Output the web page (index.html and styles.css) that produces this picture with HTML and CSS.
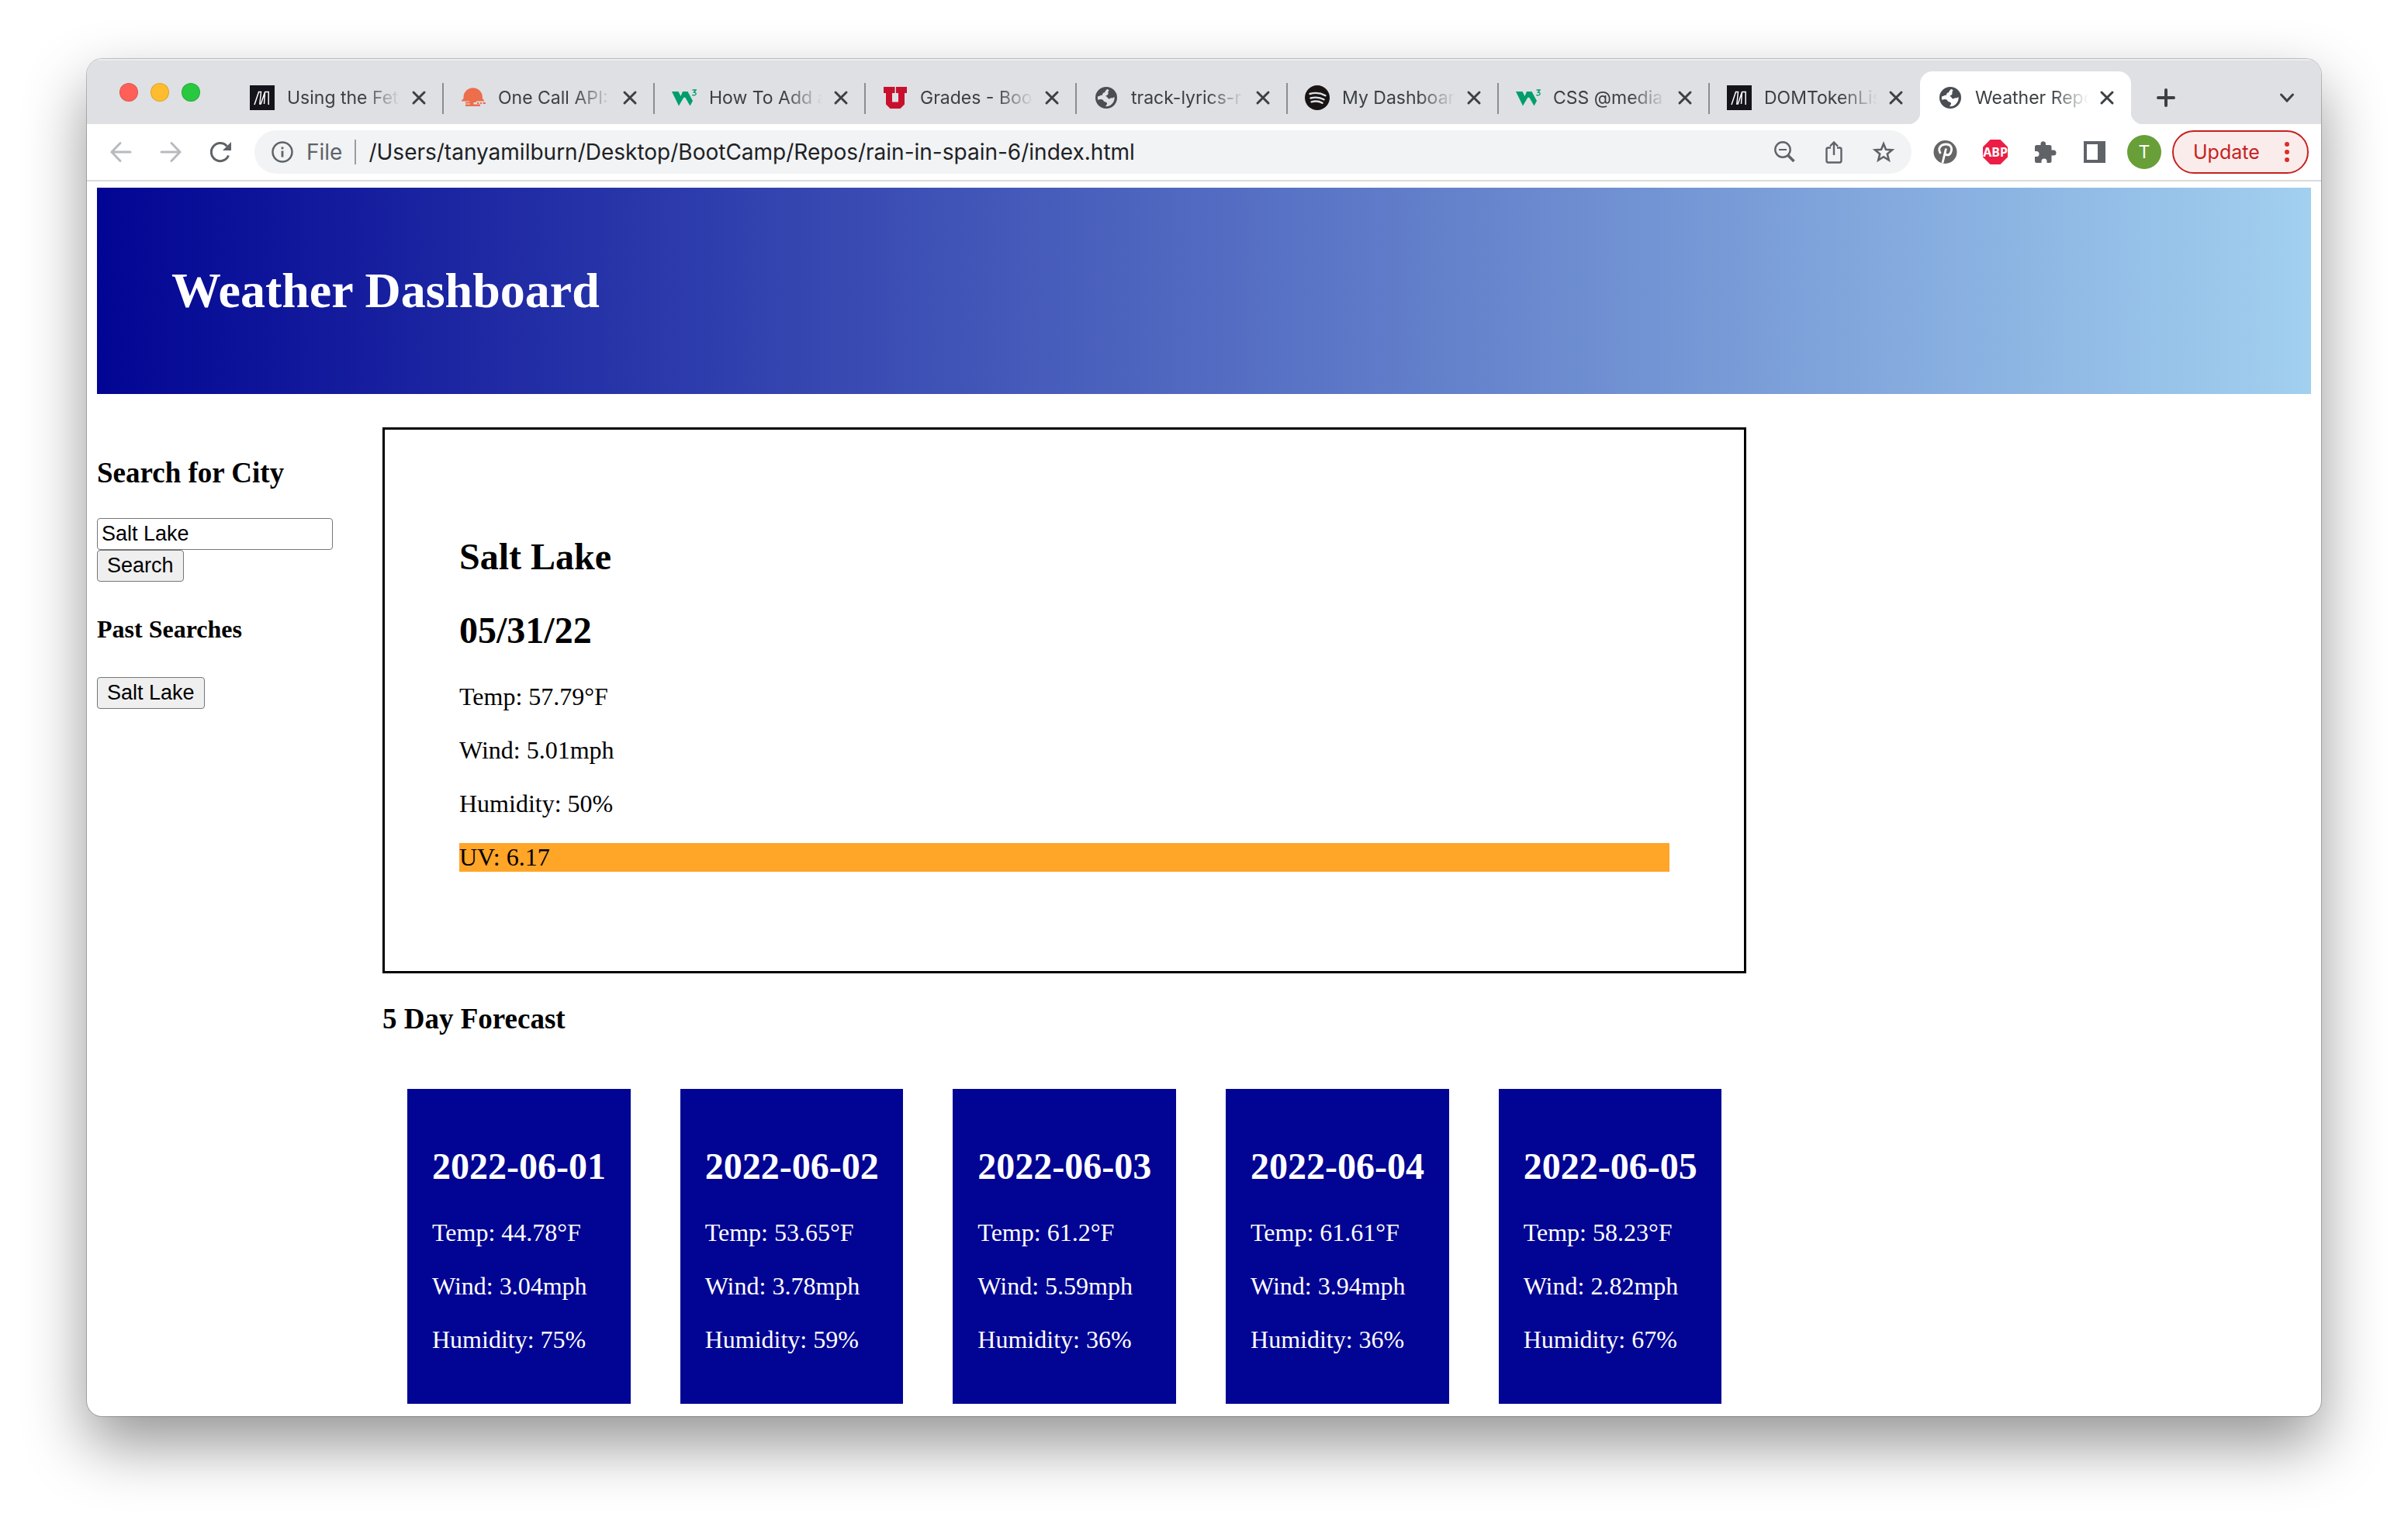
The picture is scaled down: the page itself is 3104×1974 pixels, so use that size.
FILE: index.html
```html
<!DOCTYPE html>
<html lang="en">
<head>
<meta charset="utf-8">
<meta name="viewport" content="width=device-width, initial-scale=1">
<title>Weather Report</title>
<link rel="stylesheet" href="styles.css">
</head>
<body>
<svg class="sprite" aria-hidden="true">
  <symbol id="close" viewBox="0 0 24 24"><path d="M5 5L19 19M19 5L5 19" stroke="currentColor" stroke-width="3" stroke-linecap="round" fill="none"/></symbol>
  <symbol id="mdn" viewBox="0 0 32 32"><rect width="32" height="32" fill="#15141a"/><path d="M6 25L11.500 8.500H14.500L12.800 24H14.300L19.500 8.500L18.500 24M19.500 8.500H24.200V25" stroke="#fff" stroke-width="1.500" fill="none"/></symbol>
  <symbol id="owm" viewBox="0 0 32 32"><path d="M1 20.500v-1.500C3 18.500 3.500 17.500 3.500 15.500a12.200 12.200 0 0 1 24.400 0C27.900 17.500 28.500 18.500 30 19v1.500H20v1.500h-3.500v2.500H25v2.500H6v-2.500h6v-1H6v-2h5v-1zM21 22h2.500v2H21zM25 22h2v2h-2zM28.500 22H32v2h-3.500z" fill="#ec6e4c"/></symbol>
  <symbol id="w3" viewBox="0 0 32 32"><path d="M0 8H8.500L11.500 14L14 8H20.500L27 20L23.500 26.500L17.500 16L15.500 15.500L9 26.500z" fill="#009e6b"/><path d="M26.500 6h4.500l-2.500 3q3 0 2.500 2.500-.8 2-4.700 1" stroke="#009e6b" stroke-width="1.400" fill="none"/></symbol>
  <symbol id="utah" viewBox="0 0 32 32"><path d="M1 2h14.500v8H12v11.500h8V10h-3V2h14v8h-3v14.500l-5.500 5.500h-13L4 24.500V10H1z" fill="#c8102e"/></symbol>
  <symbol id="globe" viewBox="0 0 32 32"><path fill-rule="evenodd" d="M16 2a14 14 0 1 0 0 28 14 14 0 0 0 0-28zM17 4.800c-1 1.700-3 2.600-2.800 4.500-2.500 0-3.200 1.700-3 3.200-2.600 0-3.700 1.600-6.100 1.700-.4 2-.2 3.400.2 4.600 3.500-1.600 6.700-.8 7.200 1.200.3 1.500 3 1.200 4.300 2.700 1 1.200-.8 2.600-1.800 4.500 3 .3 6-.8 8.300-3.200 2.600-2.700 3.600-5.600 3.200-9.300-1.400 1.500-2.700 2-3.700 1.600-1.500-.5-1.900 1.600-3.700 1-1.600-.6-1.500-3-4-3.200 1.200-2 2.700-1.100 3.300-2.700.6-1.500-.9-2.600 1.300-5.100z" fill="#4a4e53"/></symbol>
  <symbol id="spotify" viewBox="0 0 32 32"><circle cx="16" cy="16" r="16" fill="#191414"/><path d="M6.500 11q10.500-3 20 2.200M7.500 16.500q9.500-2.500 17 1.800M8.500 21.300q8-2 14 1.500" stroke="#dee1e6" stroke-width="2.400" stroke-linecap="round" fill="none"/></symbol>
</svg>

<div class="window">
  <nav class="tabs" aria-label="Tabs">
    <div class="lights">
      <button class="light red" aria-label="Close window"></button>
      <button class="light yellow" aria-label="Minimize"></button>
      <button class="light green" aria-label="Zoom"></button>
    </div>
    <div class="tab"><svg class="favicon"><use href="#mdn"/></svg><span class="tab-title">Using the Fetch</span><button class="tab-close" aria-label="Close tab"><svg><use href="#close"/></svg></button></div>
    <div class="tab"><svg class="favicon"><use href="#owm"/></svg><span class="tab-title">One Call API: </span><button class="tab-close" aria-label="Close tab"><svg><use href="#close"/></svg></button></div>
    <div class="tab"><svg class="favicon"><use href="#w3"/></svg><span class="tab-title">How To Add a</span><button class="tab-close" aria-label="Close tab"><svg><use href="#close"/></svg></button></div>
    <div class="tab"><svg class="favicon"><use href="#utah"/></svg><span class="tab-title">Grades - Boot</span><button class="tab-close" aria-label="Close tab"><svg><use href="#close"/></svg></button></div>
    <div class="tab"><svg class="favicon"><use href="#globe"/></svg><span class="tab-title">track-lyrics-r</span><button class="tab-close" aria-label="Close tab"><svg><use href="#close"/></svg></button></div>
    <div class="tab"><svg class="favicon"><use href="#spotify"/></svg><span class="tab-title">My Dashboard</span><button class="tab-close" aria-label="Close tab"><svg><use href="#close"/></svg></button></div>
    <div class="tab"><svg class="favicon"><use href="#w3"/></svg><span class="tab-title">CSS @media</span><button class="tab-close" aria-label="Close tab"><svg><use href="#close"/></svg></button></div>
    <div class="tab last"><svg class="favicon"><use href="#mdn"/></svg><span class="tab-title">DOMTokenList</span><button class="tab-close" aria-label="Close tab"><svg><use href="#close"/></svg></button></div>
    <div class="tab active"><svg class="favicon"><use href="#globe"/></svg><span class="tab-title">Weather Report</span><button class="tab-close" aria-label="Close tab"><svg><use href="#close"/></svg></button></div>
    <button class="strip-button" aria-label="New tab"><svg viewBox="0 0 24 24"><path d="M12 2V22M2 12H22" stroke="currentColor" stroke-width="4" stroke-linecap="round"/></svg></button>
    <button class="strip-button menu" aria-label="Search tabs"><svg viewBox="0 0 24 24"><path d="M4.500 8L12 16L19.500 8" stroke="currentColor" stroke-width="3" fill="none" stroke-linecap="round"/></svg></button>
  </nav>

  <div class="toolbar">
    <div class="tools">
      <button class="tool faded" aria-label="Back"><svg viewBox="0 0 32 32"><path d="M28 16H4M15 4.500L4 16L15 27.500" fill="none" stroke="currentColor" stroke-width="3" stroke-linecap="round"/></svg></button>
      <button class="tool faded" aria-label="Forward"><svg viewBox="0 0 32 32"><path d="M4 16H28M17 4.500L28 16L17 27.500" fill="none" stroke="currentColor" stroke-width="3" stroke-linecap="round"/></svg></button>
      <button class="tool" aria-label="Reload"><svg viewBox="0 0 32 32"><path d="M26.500 20.500A11.500 11.500 0 1 1 24.500 8.500" fill="none" stroke="currentColor" stroke-width="3"/><path d="M30 3V14H19z" fill="currentColor"/></svg></button>
    </div>
    <div class="omnibox">
      <svg class="info" viewBox="0 0 28 28"><circle cx="14" cy="14" r="12.500" fill="none" stroke="currentColor" stroke-width="2.500"/><path d="M14 12.500V20.500M14 7.500V10.200" stroke="currentColor" stroke-width="2.800"/></svg>
      <label class="scheme" for="url">File</label>
      <input class="url" id="url" type="text" value="/Users/tanyamilburn/Desktop/BootCamp/Repos/rain-in-spain-6/index.html">
      <button class="tool" aria-label="Zoom"><svg viewBox="0 0 32 32"><circle cx="14" cy="13" r="9.700" fill="none" stroke="currentColor" stroke-width="2.400"/><path d="M9 13H19" stroke="currentColor" stroke-width="2"/><path d="M21 20.500L28.500 28" stroke="currentColor" stroke-width="3.600"/></svg></button>
      <button class="tool" aria-label="Share"><svg viewBox="0 0 32 32"><path d="M12 10.500H8.500Q6.500 10.500 6.500 12.500V27Q6.500 29.500 8.500 29.500H23.500Q25.500 29.500 25.500 27V12.500Q25.500 10.500 23.500 10.500H20M16 20V3.500M11 8.500L16 3.500L21 8.500" fill="none" stroke="currentColor" stroke-width="2.400"/></svg></button>
      <button class="tool" aria-label="Bookmark"><svg viewBox="0 0 32 32"><path d="M16 5.500L19 12.800L27 13.400L20.800 18.500L22.800 26.500L16 22.200L9.200 26.500L11.200 18.500L5 13.400L13 12.800z" fill="none" stroke="currentColor" stroke-width="2.600"/></svg></button>
    </div>
    <div class="tools extensions">
      <button class="tool" aria-label="Pinterest"><svg viewBox="0 0 32 32"><circle cx="15.500" cy="16" r="15" fill="#666"/><path d="M9.500 18C5 11 10 6 16.500 6C23.500 6 25 12 22.500 17C20.500 21 16 20.500 15 17.500M16.500 11.500L12 30" fill="none" stroke="#fff" stroke-width="2.800"/></svg></button>
      <button class="tool" aria-label="Adblock Plus"><svg viewBox="0 0 32 32"><path d="M9.500 0H22.500L32 9.500V22.500L22.500 32H9.500L0 22.500V9.500z" fill="#ed1e45"/><text x="16" y="22" class="abp" text-anchor="middle">ABP</text></svg></button>
      <button class="tool" aria-label="Extensions"><svg viewBox="0 0 32 32"><path d="M3 9.500Q3 7 5.500 7H10.500V5A3.300 3.300 0 0 1 17 5V7H22Q24.500 7 24.500 9.500V13.500H27A3.500 3.500 0 0 1 27 20.500H24.500V27.500Q24.500 30 22 30H18.500V28A3.500 3.500 0 0 0 11.500 28V30H5.500Q3 30 3 27.500V22H5A3.500 3.500 0 0 0 5 15H3z" fill="currentColor"/></svg></button>
      <button class="tool" aria-label="Side panel"><svg viewBox="0 0 32 32"><path d="M2 2H30V30H2zM6 6V26H20V6z" fill="currentColor" fill-rule="evenodd"/></svg></button>
      <button class="tool" aria-label="Profile"><span class="avatar">T</span></button>
    </div>
    <button class="update">Update<svg viewBox="0 0 8 28"><circle cx="4" cy="4" r="3"/><circle cx="4" cy="14" r="3"/><circle cx="4" cy="24" r="3"/></svg></button>
  </div>

  <div class="page">
    <header class="banner"><h1>Weather Dashboard</h1></header>
    <div class="content">
      <aside class="sidebar">
        <h3><label for="city">Search for City</label></h3>
        <input class="city" id="city" type="text" value="Salt Lake">
        <button class="plain-button">Search</button>
        <h4>Past Searches</h4>
        <button class="plain-button">Salt Lake</button>
      </aside>
      <main>
        <section class="today">
          <h2>Salt Lake</h2>
          <h2>05/31/22</h2>
          <p>Temp: 57.79°F</p>
          <p>Wind: 5.01mph</p>
          <p>Humidity: 50%</p>
          <p class="uv">UV: 6.17</p>
        </section>
        <h3>5 Day Forecast</h3>
        <section class="forecast">
          <article class="day"><h2>2022-06-01</h2><p>Temp: 44.78°F</p><p>Wind: 3.04mph</p><p>Humidity: 75%</p></article>
          <article class="day"><h2>2022-06-02</h2><p>Temp: 53.65°F</p><p>Wind: 3.78mph</p><p>Humidity: 59%</p></article>
          <article class="day"><h2>2022-06-03</h2><p>Temp: 61.2°F</p><p>Wind: 5.59mph</p><p>Humidity: 36%</p></article>
          <article class="day"><h2>2022-06-04</h2><p>Temp: 61.61°F</p><p>Wind: 3.94mph</p><p>Humidity: 36%</p></article>
          <article class="day"><h2>2022-06-05</h2><p>Temp: 58.23°F</p><p>Wind: 2.82mph</p><p>Humidity: 67%</p></article>
        </section>
      </main>
    </div>
  </div>
</div>
</body>
</html>
```

FILE: styles.css
```css
* { box-sizing: border-box; }

body {
  margin: 0;
  min-height: 100vh;
  padding: 76px 112px 148px;
  display: flex;
  flex-direction: column;
  background: #fff;
  color: #000;
  font-family: "Liberation Serif", "Times New Roman", serif;
  font-size: 32px;
  line-height: 37px;
}

button {
  margin: 0;
  padding: 0;
  border: 0;
  background: none;
  color: inherit;
  font: inherit;
}

svg { display: block; }
.sprite { display: none; }

.window {
  flex: 1;
  display: flex;
  flex-direction: column;
  border-radius: 20px;
  background: #fff;
  overflow: hidden;
  box-shadow: 0 0 0 1px rgba(0, 0, 0, 0.22), 0 36px 80px rgba(0, 0, 0, 0.42);
}

/* Tab strip */
.tabs {
  display: flex;
  align-items: center;
  padding-top: 16px;
  background: #dee0e4;
  box-shadow: inset 0 2px 0 #eceef0;
  color: #3c4043;
  font-family: Inter, sans-serif;
  font-size: 23px;
  line-height: 32px;
}

.lights {
  display: flex;
  flex: 0 0 187px;
  gap: 16px;
  padding-left: 42px;
  padding-bottom: 14px;
}

.light {
  width: 24px;
  height: 24px;
  border: 1px solid rgba(0, 0, 0, 0.12);
  border-radius: 50%;
}
.red { background: #ff5f57; }
.yellow { background: #febc2e; }
.green { background: #28c840; }

.tab {
  position: relative;
  display: flex;
  flex: 0 1 272px;
  min-width: 0;
  align-items: center;
  height: 68px;
  padding: 0 19px 0 23px;
}

.tab:not(.last):not(.active)::after {
  content: "";
  position: absolute;
  right: -1px;
  top: 15px;
  width: 2px;
  height: 40px;
  background: #8b8d91;
}

.favicon {
  flex: none;
  width: 32px;
  height: 32px;
}

.tab-title {
  flex: 1;
  min-width: 0;
  margin-left: 16px;
  margin-right: 12px;
  overflow: hidden;
  white-space: nowrap;
  -webkit-mask-image: linear-gradient(90deg, #000 calc(100% - 48px), transparent);
  mask-image: linear-gradient(90deg, #000 calc(100% - 48px), transparent);
}

.tab-close svg {
  width: 24px;
  height: 24px;
}

.active {
  border-radius: 16px 16px 0 0;
  background: #fff;
}

.active::before,
.active::after {
  content: "";
  position: absolute;
  bottom: 0;
  width: 16px;
  height: 16px;
}
.active::before {
  left: -16px;
  background: radial-gradient(circle at 0 0, transparent 16px, #fff 17px);
}
.active::after {
  right: -16px;
  background: radial-gradient(circle at 100% 0, transparent 16px, #fff 17px);
}

.strip-button {
  margin-left: 33px;
}
.strip-button.menu {
  margin-left: auto;
  margin-right: 32px;
}
.strip-button svg {
  width: 24px;
  height: 24px;
}

/* Toolbar */
.toolbar {
  display: flex;
  align-items: center;
  padding: 8px 16px 8px 12px;
  border-bottom: 2px solid #dadbdc;
  color: #5f6368;
  font-family: Inter, sans-serif;
  font-size: 28px;
  line-height: 32px;
}

.tools { display: flex; }

.tool {
  display: flex;
  flex: none;
  align-items: center;
  justify-content: center;
  width: 64px;
  height: 56px;
}
.tool svg {
  width: 32px;
  height: 32px;
}
.faded { color: #b8babd; }

.omnibox {
  display: flex;
  flex: 1;
  min-width: 0;
  align-items: center;
  margin: 0 12px;
  padding: 0 4px 0 22px;
  border-radius: 28px;
  background: #f1f3f4;
}

.info {
  flex: none;
  width: 28px;
  height: 28px;
}

.scheme {
  margin-left: 17px;
  padding-right: 16px;
  border-right: 2px solid #9a9da1;
}

.url {
  flex: 1;
  min-width: 0;
  padding: 0 0 0 16px;
  border: 0;
  outline: 0;
  background: none;
  color: #202124;
  font: inherit;
}

.abp {
  fill: #fff;
  font: bold 16px "Noto Sans", sans-serif;
}

.avatar {
  width: 44px;
  height: 44px;
  border-radius: 50%;
  background: #689f38;
  color: #fff;
  font-size: 23px;
  line-height: 44px;
}

.extensions { margin-right: 4px; }

.update {
  display: flex;
  align-items: center;
  justify-content: space-between;
  width: 176px;
  height: 56px;
  padding: 0 22px 0 25px;
  border: 2px solid #c5221f;
  border-radius: 28px;
  background: #fbecec;
  color: #c5221f;
  font-size: 25px;
}
.update svg {
  width: 8px;
  height: 28px;
  fill: #d93025;
}

/* Weather page */
.page { padding: 8px 13px 16px; }

.banner {
  padding: 96px;
  background: linear-gradient(90deg, #020593, #a2d0ef);
  color: #fff;
}

h1 {
  margin: 0;
  font-size: 64px;
  line-height: 74px;
}
h2 {
  margin: 40px 0;
  font-size: 48px;
  line-height: 55px;
}
h3 {
  margin: 37px 0;
  font-size: 37px;
  line-height: 43px;
}
h4 {
  margin: 43px 0;
  font-size: 32px;
  line-height: 37px;
}
p { margin: 32px 0; }

.content {
  display: grid;
  grid-template-columns: 368px minmax(0, 29fr) 12fr;
  margin-top: 43px;
}

.sidebar {
  display: flex;
  flex-direction: column;
  align-items: flex-start;
  padding-right: 64px;
}

.city,
.plain-button {
  border: 1px solid #767676;
  border-radius: 4px;
  font-family: "Liberation Sans", Arial, sans-serif;
  font-size: 27px;
  line-height: 31px;
}
.city {
  width: 100%;
  padding: 4px 5px;
  background: #fff;
  color: #000;
}
.plain-button {
  padding: 4px 12px;
  background: #efefef;
}

.today {
  padding: 96px;
  border: 3px solid #000;
}

.uv { background: #ffa528; }

.forecast {
  display: grid;
  grid-template-columns: repeat(5, minmax(0, 1fr));
  gap: 64px;
  padding: 32px 32px 0;
}

.day {
  padding: 32px;
  background: #020593;
  color: #fff;
  white-space: nowrap;
}
```
